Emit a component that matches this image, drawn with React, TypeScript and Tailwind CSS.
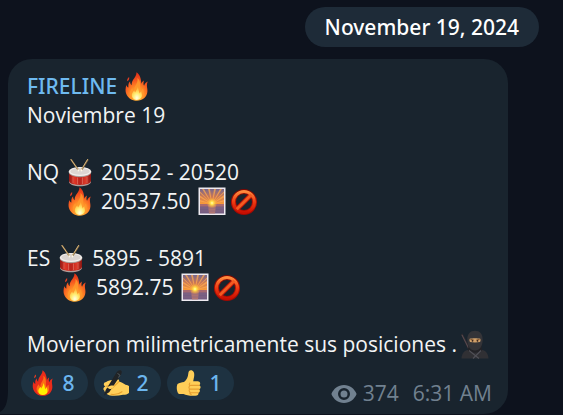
import type { ReactNode } from 'react';

const glyph = 'h-[29px] w-7 shrink-0';

function Fire({ className = glyph, flat = false }: { className?: string; flat?: boolean }) {
  return (
    <svg viewBox="0 0 28 29" className={className} role="img" aria-label="fire">
      <defs>
        <radialGradient id="flameOuter" cx="0.52" cy="0.85" r="0.85">
          <stop offset="0" stopColor="#ffc63e" />
          <stop offset="0.4" stopColor="#ff8a26" />
          <stop offset="0.7" stopColor="#f4511e" />
          <stop offset="1" stopColor="#dc2c18" />
        </radialGradient>
        <radialGradient id="flameInner" cx="0.5" cy="0.85" r="0.8">
          <stop offset="0" stopColor="#fffee6" />
          <stop offset="0.45" stopColor="#ffec70" />
          <stop offset="1" stopColor="#ffa52c" />
        </radialGradient>
      </defs>
      <path
        d="M13.500 0.200C13.500 3.500 11.800 5.200 10.300 7.500 9 9.500 8.600 11 8.600 13.200 7.300 12 7 10.500 7.200 9.200 5 11.300 5.300 13.500 5.400 15.600 4.300 15 3.700 14 3.500 12.900 2.300 16 2.200 19.200 3.300 22 5 26.300 9 28.800 13.900 28.800c5.700 0 9.900-3.500 10.500-9 .3-2.600-.5-4.300-.5-6.400 0-1.600.3-2.800.9-4-2 .8-3.300 2.200-3.700 4.400-1-1.600-.6-3.600-.2-5.400-1.400.8-2.200 2-2.500 3.300C18 7.200 17.300 2.800 13.500.2z"
        fill={flat ? '#ea2c1b' : 'url(#flameOuter)'}
      />
      <path d="M4.200 9.300c1.800-1 2.300-2.400 1.900-4.300-1.600 1.100-2.200 2.500-1.900 4.300z" fill="#df3e24" />
      <path
        d="M14.300 6c1 3.800-1.200 6.200-2.400 8.900-.7 1.500-.8 2.700-.5 4-1.300-.7-2-1.700-2.100-3-1.700 1.800-2.700 3.900-2.400 6.100.4 3.500 3.300 5.700 7 5.700s6.700-2.600 6.900-6.100c.1-2-.6-3.200-.6-5.200-1 .7-1.600 1.600-1.700 3-1.300-1.200-1.500-2.700-1.300-4.600.3-3.200-.1-6.700-2.900-8.800z"
        fill={flat ? '#ff7a14' : '#ff9a2c'}
        opacity="0.85"
      />
      <path
        d="M14.200 14.500c.5 2.700-1.100 4-2.100 6-.5-.6-.7-1.200-.7-1.900-2 1.700-2.900 3.500-2.500 5.600.5 2.300 2.500 3.700 5 3.700 2.900 0 5.100-1.900 5.100-4.600 0-1.600-.6-2.600-.7-4-.9.600-1.300 1.400-1.500 2.300-1.200-2-.7-4.800-2.600-7.100z"
        fill={flat ? '#fff000' : 'url(#flameInner)'}
      />
    </svg>
  );
}

function Drum() {
  return (
    <svg viewBox="0 0 28 29" className={glyph} role="img" aria-label="drum">
      <defs>
        <linearGradient id="drumShell">
          <stop offset="0" stopColor="#8f1714" />
          <stop offset="0.25" stopColor="#e03526" />
          <stop offset="0.5" stopColor="#b8241d" />
          <stop offset="0.75" stopColor="#dc3929" />
          <stop offset="1" stopColor="#861512" />
        </linearGradient>
      </defs>
      <path d="M3 14v9.500c0 2.500 4.800 4.500 11 4.500s11-2 11-4.500V14z" fill="url(#drumShell)" />
      <path d="M3 23c1 5.200 21 5.200 22 0v1.100c-1 5.600-21 5.600-22 0z" fill="#aaa09d" />
      <path d="M7 18.500v6.500M11.500 19.500v6.500M16.500 19.500v6.500M21 18.500v6.500" stroke="#e98d7c" strokeWidth="0.5" />
      <ellipse cx="14" cy="14.500" rx="11.200" ry="4.700" fill="#a9a09c" />
      <ellipse cx="14" cy="13.500" rx="11.200" ry="4.500" fill="#f4f0ed" />
      <ellipse cx="14" cy="13.400" rx="9.700" ry="3.400" fill="#ddd6d2" />
      <path d="M5.200 1.800l7.300 10.400M21.800 1.800l-6.300 10.400" stroke="#806540" strokeWidth="1.500" strokeLinecap="round" />
      <path d="M5 1.500l7.300 10.400M21.500 1.500l-6.300 10.400" stroke="#dfbd80" strokeWidth="0.900" strokeLinecap="round" />
      <circle cx="12.400" cy="12.300" r="1.100" fill="#fff8e8" />
      <circle cx="15.500" cy="12.300" r="1.100" fill="#fff8e8" />
    </svg>
  );
}

function Sunrise() {
  return (
    <svg viewBox="0 0 28 29" className={glyph} role="img" aria-label="sunrise">
      <defs>
        <linearGradient id="dawn" x2="0" y2="1">
          <stop offset="0" stopColor="#75678f" />
          <stop offset="0.5" stopColor="#c87758" />
          <stop offset="1" stopColor="#f99b38" />
        </linearGradient>
        <radialGradient id="sunGlow">
          <stop offset="0" stopColor="#ffffb8" />
          <stop offset="0.3" stopColor="#ffe24b" />
          <stop offset="1" stopColor="#ffa52c" stopOpacity="0" />
        </radialGradient>
      </defs>
      <rect x="0.500" y="0.500" width="27" height="27.500" fill="#eeeaf0" />
      <rect x="2" y="2" width="24" height="24.500" fill="#755d82" />
      <rect x="2" y="2" width="24" height="15" fill="url(#dawn)" />
      <path d="M14 17L2 10.500v-2zM14 17L4 2h2zM14 17L10 2h2zM14 17L16 2h2zM14 17L22 2h2zM14 17L26 8v2.500zM14 17L2 14.500V13zM14 17L26 13v1.500zM14 17L2 6V4.500zM14 17L26 4.500V6z" fill="#ffa94e" opacity="0.75" />
      <path d="M2 17h24v2.500H2z" fill="#a96a70" />
      <path d="M10 18h8l-1 8.500h-6z" fill="#bd7b6d" opacity="0.8" />
      <path d="M2 21h24M2 24h24" stroke="#8c6883" strokeWidth="0.6" />
      <circle cx="14" cy="16" r="5.500" fill="url(#sunGlow)" />
    </svg>
  );
}

function Prohibited() {
  return (
    <svg viewBox="0 0 28 29" className={glyph} role="img" aria-label="prohibited">
      <defs>
        <linearGradient id="banRing" x2="0" y2="1">
          <stop offset="0" stopColor="#7e0700" />
          <stop offset="0.5" stopColor="#b91003" />
          <stop offset="1" stopColor="#a20801" />
        </linearGradient>
        <linearGradient id="banShine" x2="0" y2="1">
          <stop offset="0" stopColor="#ff8a3c" />
          <stop offset="0.5" stopColor="#ee3b12" />
          <stop offset="1" stopColor="#c80f02" />
        </linearGradient>
      </defs>
      <g fill="none">
        <circle cx="14" cy="15" r="10.500" stroke="url(#banRing)" strokeWidth="5" />
        <path d="M7 22L21 8" stroke="#ba1205" strokeWidth="5" />
        <circle cx="14" cy="15" r="10.500" stroke="url(#banShine)" strokeWidth="3" />
        <path d="M6.700 22.300L21.300 7.700" stroke="#f35a20" strokeWidth="3" />
      </g>
    </svg>
  );
}

function Ninja() {
  return (
    <svg viewBox="0 0 28 29" className={glyph} role="img" aria-label="ninja">
      <path d="M0 4.500L1.500 3.500 9 18l-2 1z" fill="#302c31" />
      <path d="M1 5l6.500 13" stroke="#67565a" strokeWidth="0.800" />
      <path d="M.5 28.500c.3-5.500 3-8 7.500-9l3-1h6l3 1c4.500 1 7.200 3.500 7.500 9z" fill="#303034" />
      <path d="M7.500 15L7 20.500c3 3 11 3 14 0l-.5-5.500z" fill="#232327" />
      <path d="M6.300 9.500C6.300 4 9.300.8 14 .8s7.700 3.200 7.700 8.700c0 6.500-3 11-7.700 11s-7.700-4.500-7.700-11z" fill="#343438" />
      <path d="M8.700 8.800c2.500-.8 8.100-.8 10.600 0 .4 1.300.2 2.600-.4 3.300-3 .5-6.800.5-9.800 0-.6-.7-.8-2-.4-3.300z" fill="#d0a06a" />
      <path d="M9.500 9.500l3.200.6M15.300 10.100l3.200-.6" stroke="#70431e" strokeWidth="0.900" />
      <circle cx="11.500" cy="10.900" r="0.800" fill="#30201b" />
      <circle cx="16.500" cy="10.900" r="0.800" fill="#30201b" />
      <path d="M8 20.500l10 8M20 20.500l-8 8" stroke="#505057" strokeWidth="1.100" />
    </svg>
  );
}

function WritingHand() {
  return (
    <svg viewBox="0 0 28 28" className="h-7 w-7" role="img" aria-label="writing hand">
      <path d="M2.200 21.500c-1.500-1.200-.8-3.300 1-4-2.300-1.600-1.500-4.300 1-4.500C5.500 12 8 10.800 11 11l4-.7c2-.2 2.600.9 1.800 2.200 2.200.7 4.700 1.800 6.700 3.200 1.700.2 2.800.8 3.500 1.300v7c-1.500 1.300-3.500 1.800-6 1.800-4.500 1-9.500 1.200-13 .6-2.700-.5-4.800-2-5.800-4.900z" fill="#ffd05a" />
      <path d="M4 17.200l4.500-1M4.500 21l4.500-1.300c1.500-.3 2.300-1.200 3-2.400l4.800-4.500M9 25.300c5 .6 8.500-.5 11-2.500" fill="none" stroke="#e7a12d" strokeWidth="1.100" strokeLinecap="round" />
      <path d="M2 26.500l1.600-5.300L14.500 3.500C16 1.500 17.800.7 19 1.500s.9 2.600-.4 4.700L7.200 23.200z" fill="#202326" />
      <path d="M15.500 4.500l2.300 1.400M16.500 8.500l1.600-2.400" stroke="#60686b" strokeWidth="0.800" />
      <path d="M5 18.500c2.500-1.700 5-2.300 7.200-1.600-.8 1.900-2.400 3.100-4.700 3.200z" fill="#ffd05a" />
    </svg>
  );
}

function ThumbsUp() {
  return (
    <svg viewBox="0 0 28 28" className="h-7 w-7" role="img" aria-label="thumbs up">
      <path d="M2.500 15c1.700-1.300 4.300-1.600 6.500-2 2.800-2.300 4-4.700 4.300-8.500.2-2.400 1.200-3.200 2.500-3.200 2.600 0 3.900 2.500 3.400 5.700l-1 5.300h4.500c2.700.2 3.300 2.900 1.500 3.900 1.900.7 1.900 3.200 0 4 1.300 1.100.8 3-.8 3.500.5 1.900-.9 3-3.100 3-5.500.2-9-.3-11.800-1.700H4.200C1.800 24 1.100 17.600 2.500 15z" fill="#ffce58" />
      <path d="M14.800 14c-.7 1-.8 2-.1 2.800-1 1-1 2.500 0 3.300-.9 1-.6 2.300.3 3-.5 1.200.1 2 1.200 2.500M15.500 16.400h8.200M15.500 20.100h8.500M15.500 23.700h7.500" fill="none" stroke="#e79f31" strokeWidth="1.100" strokeLinecap="round" />
    </svg>
  );
}

function Row({ children, className = '' }: { children: ReactNode; className?: string }) {
  return <div className={`flex items-center ${className}`}>{children}</div>;
}

function Reaction({ label, count, children }: { label: string; count: number; children: ReactNode }) {
  return (
    <button
      type="button"
      aria-label={`${label} ${count}`}
      className="flex h-[34px] w-[67px] items-center justify-center gap-1.5 rounded-full bg-[#1e3241] pr-1 font-['Noto_Sans',sans-serif] font-medium text-[#6cb6ef]"
    >
      {children}
      <span>{count}</span>
    </button>
  );
}

export default function App() {
  return (
    <main className="min-h-screen overflow-hidden bg-[#0d121d] pt-[7px] pb-0.5 font-['Open_Sans',sans-serif] text-[21px] leading-[29px] text-[#f2f4f5]">
      <div className="flex justify-end pr-6">
        <time dateTime="2024-11-19" className="rounded-full bg-[#1e2b38] px-5 py-[5px] font-['Noto_Sans',sans-serif] leading-[30px] font-medium text-white">
          November 19, 2024
        </time>
      </div>
      <article className="relative mt-3 mr-[55px] ml-2 rounded-3xl rounded-bl-none bg-[#19242e] pt-[13px] pr-4 pb-1.5 pl-[19px]">
        <svg viewBox="0 0 8 24" className="absolute bottom-0 -left-2 h-6 w-2" aria-hidden="true">
          <path d="M8 0v24H0v-2c5-2.500 8-9 8-22z" fill="#19242e" />
        </svg>
        <Row className="gap-1.5">
          <h1 className="font-['Noto_Sans',sans-serif] font-medium text-[#6ebaf0]">FIRELINE</h1>
          <Fire />
        </Row>
        <p>Noviembre 19</p>
        <section className="mt-7">
          <Row className="gap-[7px]">NQ <Drum /> <span>20552 - 20520</span></Row>
          <Row className="gap-[7px] pl-[39px]"><Fire /> <span>20537.50</span> <Row className="gap-1"><Sunrise /><Prohibited /></Row></Row>
        </section>
        <section className="mt-7">
          <Row className="gap-[7px]">ES <Drum /> <span>5895 - 5891</span></Row>
          <Row className="gap-[7px] pl-[34px]"><Fire /> <span>5892.75</span> <Row className="gap-1"><Sunrise /><Prohibited /></Row></Row>
        </section>
        <Row className="mt-7 gap-1 whitespace-nowrap">Movieron milimetricamente sus posiciones . <Ninja /></Row>
        <footer className="mt-[7px] flex items-start justify-between">
          <div className="-ml-1.5 flex gap-1.5">
            <Reaction label="Fire" count={8}><Fire className="h-[26px] w-[26px]" flat /></Reaction>
            <Reaction label="Writing hand" count={2}><WritingHand /></Reaction>
            <Reaction label="Thumbs up" count={1}><ThumbsUp /></Reaction>
          </div>
          <div className="flex items-center gap-1.5 pt-[13px] text-[#718190]">
            <svg viewBox="0 0 26 20" className="h-5 w-[26px]" role="img" aria-label="views">
              <path fillRule="evenodd" d="M13 1C7 1 2.500 4.800.4 10 2.500 15.200 7 19 13 19s10.500-3.800 12.600-9C23.500 4.800 19 1 13 1zm0 3a6 6 0 1 1 0 12 6 6 0 0 1 0-12zm0 2.500a3.500 3.500 0 1 0 0 7 3.500 3.500 0 0 0 0-7z" fill="currentColor" />
            </svg>
            <span>374</span>
            <time className="ml-2" dateTime="06:31">6:31 AM</time>
          </div>
        </footer>
      </article>
    </main>
  );
}
